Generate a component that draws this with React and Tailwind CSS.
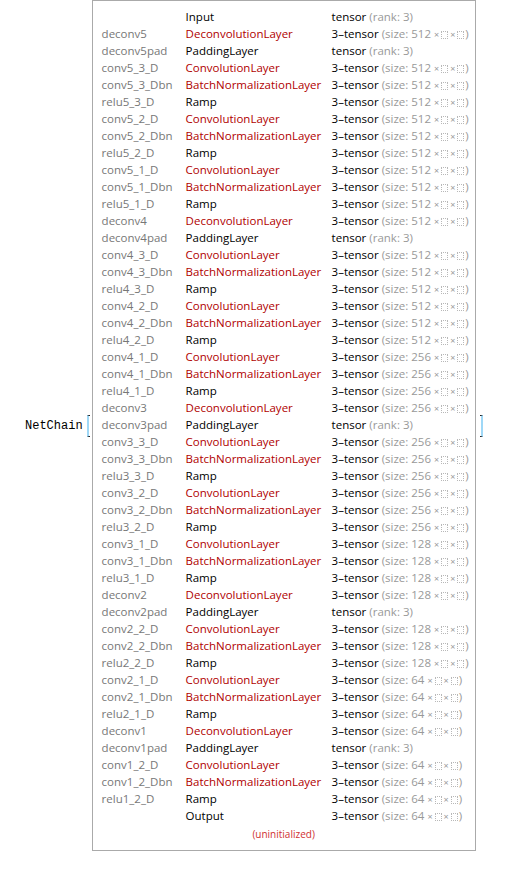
const sz = (n) => ({ kind: "size", n });
const rk = { kind: "rank" };

const layers = [
  ["", "Input", rk],
  ["deconv5", "DeconvolutionLayer", sz(512)],
  ["deconv5pad", "PaddingLayer", rk],
  ["conv5_3_D", "ConvolutionLayer", sz(512)],
  ["conv5_3_Dbn", "BatchNormalizationLayer", sz(512)],
  ["relu5_3_D", "Ramp", sz(512)],
  ["conv5_2_D", "ConvolutionLayer", sz(512)],
  ["conv5_2_Dbn", "BatchNormalizationLayer", sz(512)],
  ["relu5_2_D", "Ramp", sz(512)],
  ["conv5_1_D", "ConvolutionLayer", sz(512)],
  ["conv5_1_Dbn", "BatchNormalizationLayer", sz(512)],
  ["relu5_1_D", "Ramp", sz(512)],
  ["deconv4", "DeconvolutionLayer", sz(512)],
  ["deconv4pad", "PaddingLayer", rk],
  ["conv4_3_D", "ConvolutionLayer", sz(512)],
  ["conv4_3_Dbn", "BatchNormalizationLayer", sz(512)],
  ["relu4_3_D", "Ramp", sz(512)],
  ["conv4_2_D", "ConvolutionLayer", sz(512)],
  ["conv4_2_Dbn", "BatchNormalizationLayer", sz(512)],
  ["relu4_2_D", "Ramp", sz(512)],
  ["conv4_1_D", "ConvolutionLayer", sz(256)],
  ["conv4_1_Dbn", "BatchNormalizationLayer", sz(256)],
  ["relu4_1_D", "Ramp", sz(256)],
  ["deconv3", "DeconvolutionLayer", sz(256)],
  ["deconv3pad", "PaddingLayer", rk],
  ["conv3_3_D", "ConvolutionLayer", sz(256)],
  ["conv3_3_Dbn", "BatchNormalizationLayer", sz(256)],
  ["relu3_3_D", "Ramp", sz(256)],
  ["conv3_2_D", "ConvolutionLayer", sz(256)],
  ["conv3_2_Dbn", "BatchNormalizationLayer", sz(256)],
  ["relu3_2_D", "Ramp", sz(256)],
  ["conv3_1_D", "ConvolutionLayer", sz(128)],
  ["conv3_1_Dbn", "BatchNormalizationLayer", sz(128)],
  ["relu3_1_D", "Ramp", sz(128)],
  ["deconv2", "DeconvolutionLayer", sz(128)],
  ["deconv2pad", "PaddingLayer", rk],
  ["conv2_2_D", "ConvolutionLayer", sz(128)],
  ["conv2_2_Dbn", "BatchNormalizationLayer", sz(128)],
  ["relu2_2_D", "Ramp", sz(128)],
  ["conv2_1_D", "ConvolutionLayer", sz(64)],
  ["conv2_1_Dbn", "BatchNormalizationLayer", sz(64)],
  ["relu2_1_D", "Ramp", sz(64)],
  ["deconv1", "DeconvolutionLayer", sz(64)],
  ["deconv1pad", "PaddingLayer", rk],
  ["conv1_2_D", "ConvolutionLayer", sz(64)],
  ["conv1_2_Dbn", "BatchNormalizationLayer", sz(64)],
  ["relu1_2_D", "Ramp", sz(64)],
  ["", "Output", sz(64)],
];

const redTypes = ["DeconvolutionLayer", "ConvolutionLayer", "BatchNormalizationLayer"];

function Dots() {
  return (
    <span className="inline-block w-[7px] h-[8px] border border-dotted border-[#b8b8b8] align-[-1px] mx-[1px]"></span>
  );
}

function Shape({ out }) {
  if (out.kind === "rank") {
    return (
      <span>
        tensor <span className="text-[#999]">(rank: 3)</span>
      </span>
    );
  }
  return (
    <span className="whitespace-nowrap">
      3–tensor{" "}
      <span className="text-[#999]">
        (size: {out.n}
        <span className="text-[9px] ml-[3px] mr-[1px]">×</span>
        <Dots />
        <span className="text-[9px] mx-[1px]">×</span>
        <Dots />)
      </span>
    </span>
  );
}

function Bracket({ side }) {
  return (
    <div
      className={
        "h-[22px] w-[3px] border-y border-[#222] " +
        (side === "left" ? "border-l-2 border-l-[#9fd8f7]" : "border-r-2 border-r-[#9fd8f7]")
      }
    ></div>
  );
}

export default function App() {
  return (
    <div className="min-h-screen bg-white font-['Open_Sans','Liberation_Sans',sans-serif] text-[11.5px]">
      <div className="flex items-center pl-[25px]">
        <span className="font-['Liberation_Mono',monospace] text-[12px] text-black">NetChain</span>
        <div className="ml-[4px] mr-[2px]">
          <Bracket side="left" />
        </div>
        <div className="border border-[#aaa] w-[384px] h-[851px] pl-[9px] pt-[7px]">
          <div className="grid grid-cols-[84px_146px_1fr]">
            {layers.map(([name, type, out], i) => (
              <div key={i} className="contents">
                <div className="h-[17px] leading-[17px] text-[#777]">{name}</div>
                <div
                  className={
                    "h-[17px] leading-[17px] " +
                    (redTypes.includes(type) ? "text-[#b00000]" : "text-black")
                  }
                >
                  {type}
                </div>
                <div className="h-[17px] leading-[17px] text-black">
                  <Shape out={out} />
                </div>
              </div>
            ))}
          </div>
          <div className="text-center text-[10px] text-[#d03030] mt-[3px] pr-[9px]">(uninitialized)</div>
        </div>
        <div className="ml-[4px]">
          <Bracket side="right" />
        </div>
      </div>
    </div>
  );
}
